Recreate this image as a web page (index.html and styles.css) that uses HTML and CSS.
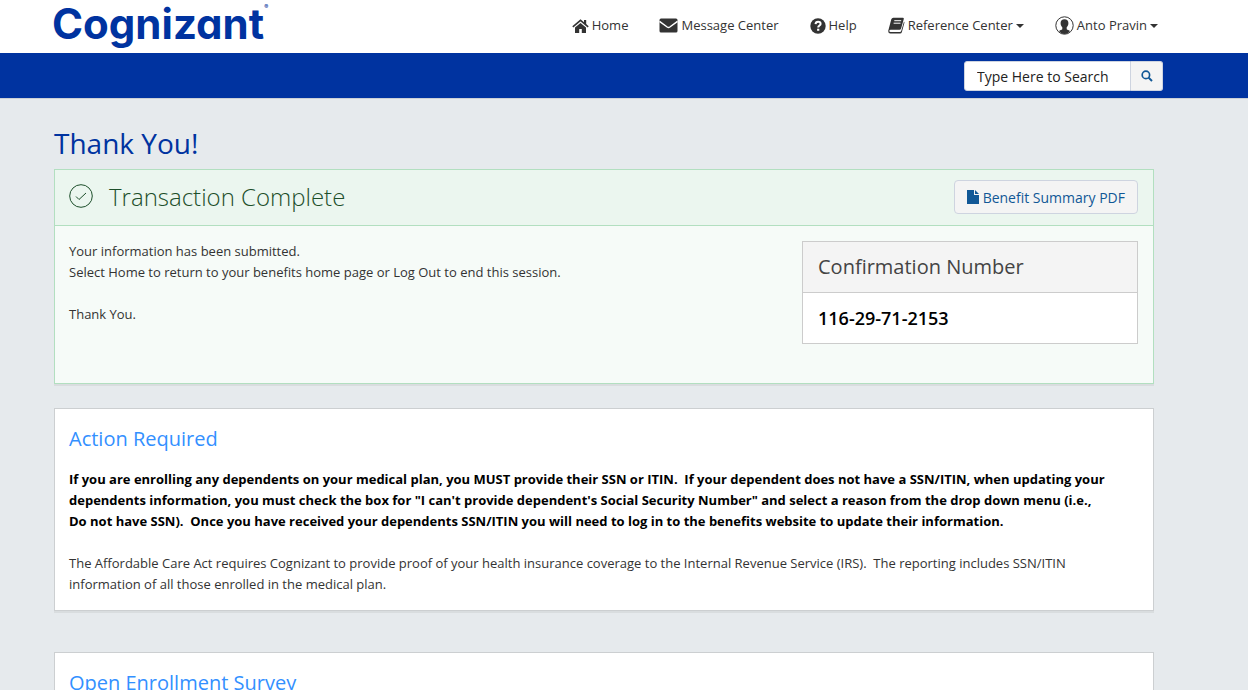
FILE: index.html
```html
<!DOCTYPE html>
<html lang="en">
<head>
<meta charset="utf-8">
<title>Thank You! - Cognizant Benefits</title>
<link rel="stylesheet" href="styles.css">
</head>
<body>
<header class="topbar">
  <a class="logo" href="#" aria-label="Cognizant home">Cognizant<span class="logo-mark">®</span></a>
  <nav class="nav">
    <a href="#"><svg width="17" height="16" viewBox="0 0 17 16"><path d="M8.500 5 3 9.500V15h4.200v-4h2.600v4H14V9.500z"/><path d="M.8 8.800 8.500 2.400l7.700 6.400" fill="none" stroke="currentColor" stroke-width="1.600"/><path d="M12 2h2.200v5L12 5.200z"/></svg>Home</a>
    <a href="#"><svg width="19" height="15" viewBox="0 0 19 15"><rect x=".5" y=".5" width="18" height="14" rx="1.500"/><path d="M.5 3.300 8.200 9q1.300.9 2.600 0l7.700-5.700" fill="none" stroke="#fff" stroke-width="1.500"/></svg>Message Center</a>
    <a href="#"><svg width="16" height="16" viewBox="0 0 16 16"><circle cx="8" cy="8" r="7.700"/><path d="M5.500 6.200Q5.700 3.700 8.100 3.700q2.500 0 2.500 2.200c0 1.500-2.400 1.700-2.400 3.500" fill="none" stroke="#fff" stroke-width="2"/><path d="M7.100 10.700h2.200v2.100H7.100z" fill="#fff"/></svg>Help</a>
    <a href="#"><svg width="17" height="17" viewBox="0 0 17 17"><path d="M5.300.7h9.500q1.300 0 1 1.300l-2.700 9.500q-.4 1.300-1.700 1.300H2.700q-1.400 0-1.400 1.200 0 1 1.300 1h9.200q1.100 0 1.400-1.100L16 4.600l.5.8-2.600 9.500q-.4 1.500-1.900 1.500H2.400Q.2 16.400.2 13.900L3.300 2.300Q3.800.7 5.300.7z"/><path d="M6.300 3.700h6.900M5.600 6.200h6.900" stroke="#fff" stroke-width="1"/></svg>Reference Center<i class="caret"></i></a>
    <a href="#"><svg width="19" height="19" viewBox="0 0 19 19"><circle cx="9.500" cy="9.500" r="8.700" fill="#fff" stroke="currentColor"/><path d="M9.500 3.300c2.500 0 3.900 1.500 3.900 3.700 0 2.100-.8 3.200-1.700 4.200v2.100c.7.8 2.300.7 3.300 1.800-1.400 1.900-3.300 2.900-5.500 2.900s-4.100-1-5.500-2.900c1-1.100 2.600-1 3.300-1.800v-2.100c-.9-1-1.700-2.100-1.700-4.200 0-2.200 1.400-3.700 3.900-3.700z"/></svg>Anto Pravin<i class="caret"></i></a>
  </nav>
</header>
<div class="searchbar">
  <form class="search">
    <input type="text" aria-label="Search" placeholder="Type Here to Search">
    <button type="button" aria-label="Search"><svg width="12" height="12" viewBox="0 0 12 12"><circle cx="4.900" cy="4.900" r="3.700" fill="none" stroke="currentColor" stroke-width="1.700"/><path d="m7.600 7.600 3.400 3.400" stroke="currentColor" stroke-width="2"/></svg></button>
  </form>
</div>
<main class="page">
  <h1>Thank You!</h1>
  <section class="card success">
    <div class="success-head">
      <svg class="check" width="24" height="24" viewBox="0 0 24 24"><circle cx="12" cy="12" r="11.300"/><path d="m7 12.500 3 3L17 9"/></svg>
      <h2>Transaction Complete</h2>
      <button class="pdf" type="button"><svg width="12" height="14" viewBox="0 0 12 14"><path d="M0 0h7v5h5v9H0z"/><path d="M8 0v4h4z"/></svg>Benefit Summary PDF</button>
    </div>
    <div class="success-body">
      <p>Your information has been submitted.<br>Select Home to return to your benefits home page or Log Out to end this session.<br><br>Thank You.</p>
      <div class="confirm">
        <h3>Confirmation Number</h3>
        <p>116-29-71-2153</p>
      </div>
    </div>
  </section>
  <section class="card action">
    <h2>Action Required</h2>
    <p class="strong">If you are enrolling any dependents on your medical plan, you MUST provide their SSN or ITIN.&nbsp; If your dependent does not have a SSN/ITIN, when updating your<br>dependents information, you must check the box for "I can't provide dependent's Social Security Number" and select a reason from the drop down menu (i.e.,<br>Do not have SSN).&nbsp; Once you have received your dependents SSN/ITIN you will need to log in to the benefits website to update their information.</p>
    <p>The Affordable Care Act requires Cognizant to provide proof of your health insurance coverage to the Internal Revenue Service (IRS).&nbsp; The reporting includes SSN/ITIN<br>information of all those enrolled in the medical plan.</p>
  </section>
  <section class="card survey">
    <h2>Open Enrollment Survey</h2>
  </section>
</main>
</body>
</html>
```
FILE: styles.css
```css
* { box-sizing: border-box; }
body {
  margin: 0;
  background: #e6eaed;
  color: #333;
  font: 400 13px/21px "Open Sans", "Noto Sans", sans-serif;
}
h1, h2, h3, p { margin: 0; font-weight: 400; }
svg { fill: currentColor; flex: none; }
.topbar {
  display: flex;
  align-items: flex-start;
  justify-content: space-between;
  padding: 0 90px 0 52px;
  background: #fff;
}
.logo {
  display: flex;
  align-items: flex-start;
  padding-bottom: 5px;
  color: #0033a0;
  font: 700 42px/48px Inter, sans-serif;
  font-feature-settings: "cv11";
  text-decoration: none;
}
.logo-mark { font-size: 6px; line-height: 14px; }
.nav { display: flex; gap: 31px; padding-top: 15px; }
.nav a {
  display: flex;
  align-items: center;
  gap: 3px;
  color: #333;
  text-decoration: none;
  white-space: nowrap;
}
.caret {
  border: 4px solid transparent;
  border-top-color: currentColor;
  border-bottom: 0;
}
.searchbar {
  display: flex;
  justify-content: flex-end;
  padding: 8px 85px 7px 54px;
  background: #0033a0;
  border-bottom: 1px solid #ccd0d6;
}
.search { display: flex; height: 30px; }
.search input {
  width: 167px;
  padding: 0 12px;
  border: 1px solid #ced4e0;
  border-radius: 3px 0 0 3px;
  font: inherit;
  font-size: 14px;
}
.search input::placeholder { color: #222; }
.search button {
  display: grid;
  place-items: center;
  width: 32px;
  padding: 0;
  border: 1px solid #ced4e0;
  border-left: 0;
  border-radius: 0 3px 3px 0;
  background: #f4f4f4;
  color: #115896;
}
.page { padding: 27px 94px 40px 54px; }
h1 { margin-bottom: 8px; color: #0033a0; font-size: 28px; line-height: 35px; }
.card {
  background: #fff;
  border: 1px solid #cccfd1;
  box-shadow: 0 2px 0 #d9dddf;
}
.success { border-color: #b2dfc0; background: #f6fbf8; }
.success-head {
  display: flex;
  align-items: flex-start;
  padding: 10px 15px 11px 14px;
  gap: 16px;
  border-bottom: 1px solid #b2dfc0;
  background: #ebf6ef;
  color: #1d4f2b;
}
.check { margin-top: 4px; fill: none; stroke: currentColor; }
.success-head h2 { font-size: 24px; line-height: 34px; font-weight: 300; }
.pdf {
  display: flex;
  align-items: center;
  gap: 4px;
  height: 34px;
  margin-left: auto;
  padding: 0 12px;
  border: 1px solid #ced4e0;
  border-radius: 4px;
  background: #f4f4f4;
  color: #115896;
  font: inherit;
  font-size: 14px;
}
.success-body {
  display: flex;
  justify-content: space-between;
  padding: 15px 15px 39px 14px;
}
.confirm { width: 336px; border: 1px solid #ccc; background: #fff; }
.confirm h3 {
  padding: 11px 15px;
  border-bottom: 1px solid #ccc;
  background: #f4f4f4;
  color: #444;
  font-size: 20px;
  line-height: 28px;
}
.confirm p { padding: 11px 15px; color: #000; font-size: 18px; line-height: 28px; font-weight: 600; }
.action { margin-top: 24px; padding: 16px 14px 15px; }
.action h2, .survey h2 { color: #3390ff; font-size: 20px; line-height: 28px; }
.action p { margin-top: 21px; }
.action .strong { margin-top: 16px; color: #000; font-weight: 700; }
.survey { margin-top: 41px; padding: 16px 14px; }
```
